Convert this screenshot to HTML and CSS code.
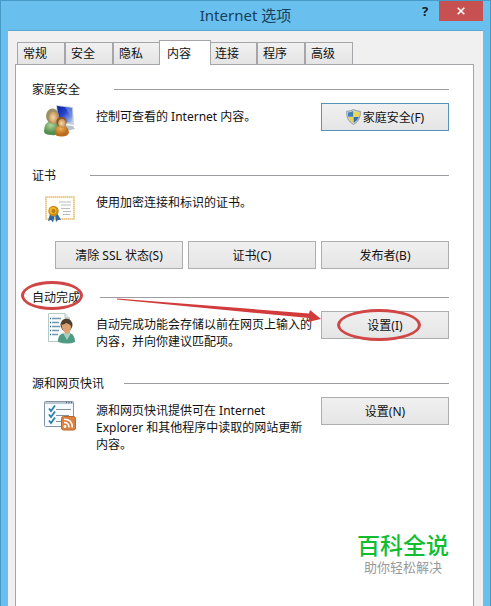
FILE: index.html
```html
<!DOCTYPE html>
<html lang="zh-CN">
<head>
<meta charset="utf-8">
<meta name="viewport" content="width=device-width, initial-scale=1">
<title>Internet 选项</title>
<link rel="stylesheet" href="styles.css">
</head>
<body>
<main class="window">
  <header class="titlebar">
    <h1 class="title">Internet 选项</h1>
    <div class="window-controls">
      <button class="help" type="button">?</button>
      <button class="close" type="button" aria-label="关闭">
        <svg width="8" height="8" viewBox="0 0 8 8"><path d="M0.7 0.7 7.3 7.3M7.3 0.7 0.7 7.3" stroke="#fff" stroke-width="1.6"/></svg>
      </button>
    </div>
  </header>
  <div class="client">
    <div class="tabs" role="tablist">
      <button class="tab" type="button" role="tab">常规</button>
      <button class="tab" type="button" role="tab">安全</button>
      <button class="tab" type="button" role="tab">隐私</button>
      <button class="tab selected" type="button" role="tab" aria-selected="true">内容</button>
      <button class="tab" type="button" role="tab">连接</button>
      <button class="tab" type="button" role="tab">程序</button>
      <button class="tab" type="button" role="tab">高级</button>
    </div>
    <div class="panel" role="tabpanel">
      <section class="group">
        <h2 class="heading wide">家庭安全</h2>
        <div class="row">
          <svg class="icon" width="34" height="34" viewBox="0 0 34 34">
            <defs>
              <linearGradient id="screen" x1="0" y1="0" x2="1" y2="1"><stop offset="0" stop-color="#0b1e9a"/><stop offset=".45" stop-color="#2743cc"/><stop offset="1" stop-color="#b9d3f6"/></linearGradient>
              <radialGradient id="green" cx=".4" cy=".3"><stop offset="0" stop-color="#b5d49a"/><stop offset="1" stop-color="#558f50"/></radialGradient>
              <radialGradient id="orange" cx=".4" cy=".3"><stop offset="0" stop-color="#f2b45c"/><stop offset="1" stop-color="#bd6e1c"/></radialGradient>
              <radialGradient id="face" cx=".45" cy=".5"><stop offset="0" stop-color="#f7d9a8"/><stop offset="1" stop-color="#c99558"/></radialGradient>
            </defs>
            <path d="M13 2 30 4 31 22 15 20Z" fill="#c8d3dc"/>
            <path d="M14 3 29 5 29.500 20 16 19Z" fill="url(#screen)"/>
            <path d="M22 4 29 5 29.500 16Z" fill="#7595e8" opacity=".6"/>
            <path d="M21 22 30 23 32 26 23 28Z" fill="#b7c2c9"/>
            <path d="M1 29Q1 18 9 18T18 28Q15 33 8 32 2 32 1 29Z" fill="url(#green)"/>
            <ellipse cx="9.500" cy="13" rx="6.500" ry="7.500" fill="#9a9168"/>
            <ellipse cx="10.500" cy="14.500" rx="4.500" ry="6" fill="url(#face)"/>
            <path d="M12 31Q12 22 18.500 22T26 30Q24 34 18 33.500 13 33.500 12 31Z" fill="url(#orange)"/>
            <circle cx="18.500" cy="19" r="5.200" fill="#8b5526"/>
            <ellipse cx="19" cy="20.300" rx="3.800" ry="4.200" fill="url(#face)"/>
          </svg>
          <p class="text">控制可查看的 Internet 内容。</p>
          <button class="button default" type="button">
            <svg width="15" height="16" viewBox="0 0 15 16">
              <path d="M7.500 .5Q10 2.200 14.300 2.300 14.800 11.500 7.500 15.500 .2 11.500 .7 2.300 5 2.200 7.500 .5Z" fill="#d5dbe0" stroke="#78868f" stroke-width=".8"/>
              <path d="M7.300 2V7.700H2.100Q1.900 5.800 2 3.500 5 3.400 7.300 2Z" fill="#3f80bd"/>
              <path d="M7.700 2V7.700H12.900Q13.100 5.800 13 3.500 10 3.400 7.700 2Z" fill="#f1d64f"/>
              <path d="M7.300 14V8.100H2.200Q3.200 11.700 7.300 14Z" fill="#ecd14b"/>
              <path d="M7.700 14V8.100H12.800Q11.800 11.700 7.700 14Z" fill="#316fae"/>
            </svg>家庭安全(F)</button>
        </div>
      </section>

      <section class="group">
        <h2 class="heading wide">证书</h2>
        <div class="row">
          <svg class="icon" width="34" height="34" viewBox="0 0 34 34">
            <rect x="3" y="8" width="28" height="22" fill="#fffef8" stroke="#e2bd78" stroke-width="1.500"/>
            <rect x="3" y="8" width="28" height="22" fill="none" stroke="#fff5d8" stroke-width="1" stroke-dasharray="1 1"/>
            <path d="M16 13H28M18 16H28M18 19.500H27M20 22.500H28M20 25.500H27" stroke="#b8bec8" stroke-width="1"/>
            <path d="M7 25 5 32 8 31 10 33.500 12 26ZM12 26 13 33 15 31 18 31 14 24Z" fill="#31699f"/>
            <circle cx="10.500" cy="22" r="5.200" fill="#c98a16"/>
            <circle cx="10" cy="21.500" r="3.600" fill="#efb62f"/>
            <circle cx="10.500" cy="22" r="1.900" fill="#b67c16"/>
          </svg>
          <p class="text">使用加密连接和标识的证书。</p>
        </div>
        <div class="button-row">
          <button class="button" type="button">清除 SSL 状态(S)</button>
          <button class="button" type="button">证书(C)</button>
          <button class="button" type="button">发布者(B)</button>
        </div>
      </section>

      <section class="group annotated">
        <h2 class="heading"><span class="circled">自动完成</span></h2>
        <div class="row">
          <svg class="icon" width="34" height="34" viewBox="0 0 34 34">
            <path d="M5.500 2.500H22L26.500 7V30.500H5.500Z" fill="#f9fcfc" stroke="#b8c8c6"/>
            <path d="M22 2.500V7H26.500" fill="#dfe9e8" stroke="#b8c8c6"/>
            <path d="M9 7.500H18M9 11.500H16M9 15.500H17M9 19.500H16M9 23.500H15" stroke="#7198b1" stroke-width="1.400"/>
            <path d="M7 7.500H8M7 11.500H8M7 15.500H8M7 19.500H8M7 23.500H8" stroke="#276b91" stroke-width="1.400"/>
            <path d="M15 30Q15 23 21 22H27Q32 24 32 31 25 34 15 31Z" fill="#4e9a82"/>
            <path d="M20 22 24 29 28 22Z" fill="#a9cfc0"/>
            <ellipse cx="23.500" cy="14" rx="6" ry="6.500" fill="#51402f"/>
            <path d="M18.500 13Q20 15 23 12 27 13 28 15 28 22 24 23 19 21 18.500 13Z" fill="#dba273"/>
          </svg>
          <p class="text">自动完成功能会存储以前在网页上输入的内容，并向你建议匹配项。</p>
          <button class="button" type="button"><span class="circled large">设置(I)</span></button>
        </div>
        <svg class="arrow" viewBox="0 0 204 24" preserveAspectRatio="none" aria-hidden="true">
          <path d="M0 .5 192 15.500 193 12 204 21 191 24 192 20 0 1.500Z" fill="#d23b3b"/>
        </svg>
      </section>

      <section class="group">
        <h2 class="heading">源和网页快讯</h2>
        <div class="row">
          <svg class="icon" width="34" height="34" viewBox="0 0 34 34">
            <rect x="1.500" y="4.500" width="29" height="25" rx="1" fill="#f8fbfd" stroke="#8293a5"/>
            <path d="M2 6H30" stroke="#bac6d3" stroke-width="2"/>
            <path d="M23 5.500H24M25.500 5.500H26.500M28 5.500H29" stroke="#54677c" stroke-width="1.300"/>
            <path d="M13 12.500H28M13 18.500H26M13 24.500H20" stroke="#8191a0" stroke-width="1.200"/>
            <path d="M6 11.500 8 14 12 8.500M6 17.500 8 20 12 14.500M6 23.500 8 26 12 20.500" fill="none" stroke="#287fab" stroke-width="1.800"/>
            <rect x="18.500" y="19.500" width="14" height="13.500" rx="2" fill="#dc8240" stroke="#b8682f"/>
            <circle cx="22" cy="29.500" r="1.400" fill="#fff"/>
            <path d="M21 25.500Q26 25.500 26 30.500M21 22.300Q29.300 22.300 29.300 30.500" fill="none" stroke="#fff" stroke-width="1.500"/>
          </svg>
          <p class="text">源和网页快讯提供可在 Internet Explorer 和其他程序中读取的网站更新内容。</p>
          <button class="button" type="button">设置(N)</button>
        </div>
      </section>
    </div>
  </div>
  <aside class="watermark">
    <strong>百科全说</strong>
    <span>助你轻松解决</span>
  </aside>
</main>
</body>
</html>
```
FILE: styles.css
```css
* {
  box-sizing: border-box;
}

body {
  margin: 0;
  color: #111;
  font: 12px/17px "Noto Sans", "Noto Sans CJK SC", sans-serif;
}

button {
  padding: 0;
  color: inherit;
  font: inherit;
}

h1,
h2,
p {
  margin: 0;
  font-weight: 400;
}

.window {
  position: relative;
  display: flex;
  flex-direction: column;
  min-height: 100vh;
  padding: 0 7px;
  background: #69bfee;
  border: solid #4799c6;
  border-width: 1px 1px 0;
}

.titlebar {
  position: relative;
  height: 29px;
}

.title {
  color: #173f58;
  font-size: 15px;
  line-height: 29px;
  text-align: center;
}

.window-controls {
  position: absolute;
  top: 0;
  right: 0;
  display: flex;
}

.help {
  width: 28px;
  height: 20px;
  background: none;
  border: 0;
  color: #12222e;
  font-size: 13px;
  font-weight: 700;
}

.close {
  display: grid;
  place-items: center;
  width: 44px;
  height: 20px;
  background: #c75050;
  border: 0;
}

.client {
  display: flex;
  flex: 1;
  flex-direction: column;
  padding: 9px 9px 0 7px;
  background: #f0f0f0;
  border-top: 1px solid #5aa9d2;
}

.tabs {
  display: flex;
  align-items: flex-end;
  height: 24px;
  padding-left: 2px;
}

.tab {
  width: 48px;
  height: 22px;
  padding-left: 5px;
  background: linear-gradient(#f1f1f1, #e4e4e4);
  border: 1px solid #a5a5aa;
  border-bottom: 0;
  text-align: left;
}

.tab.selected {
  z-index: 1;
  width: 52px;
  height: 25px;
  margin: 0 -2px -1px;
  padding-left: 7px;
  background: #fff;
}

.panel {
  flex: 1;
  padding: 16px 24px 24px 16px;
  background: #fff;
  border: 1px solid #a5a5aa;
  border-bottom: 0;
}

.group {
  margin-bottom: 20px;
}

.heading {
  display: flex;
  align-items: center;
  gap: 20px;
  height: 16px;
  margin-bottom: 6px;
  font-size: 12px;
}

.heading.wide {
  gap: 34px;
}

.heading::after {
  flex: 1;
  height: 1px;
  background: #9c9ca1;
  content: "";
}

.row {
  display: grid;
  grid-template-columns: 56px 1fr 128px;
  column-gap: 8px;
  align-items: start;
  min-height: 44px;
}

.icon {
  margin-left: 11px;
}

.text {
  padding-top: 5px;
}

.button {
  display: flex;
  align-items: center;
  justify-content: center;
  gap: 2px;
  height: 28px;
  background: linear-gradient(#f0f0f0, #e5e5e5);
  border: 1px solid #adadad;
}

.button.default {
  border-color: #5594b8;
}

.button-row {
  display: grid;
  grid-template-columns: repeat(3, 1fr);
  gap: 5px;
  margin-top: 8px;
  padding-left: 23px;
}

.annotated,
.circled {
  position: relative;
}

.circled::after {
  position: absolute;
  inset: -8px -3px -4px -11px;
  border: 3px solid #d04646;
  border-radius: 50%;
  content: "";
}

.circled.large::after {
  inset: -8px -18px -7px -30px;
}

.arrow {
  position: absolute;
  top: 9px;
  right: 128px;
  left: 85px;
  width: calc(100% - 213px);
  height: 24px;
}

.watermark {
  position: absolute;
  right: 41px;
  bottom: 30px;
  display: flex;
  flex-direction: column;
  align-items: center;
  color: #999;
  font-size: 13px;
}

.watermark strong {
  color: #12bd32;
  font-size: 23px;
  font-weight: 500;
  line-height: 28px;
}
```
